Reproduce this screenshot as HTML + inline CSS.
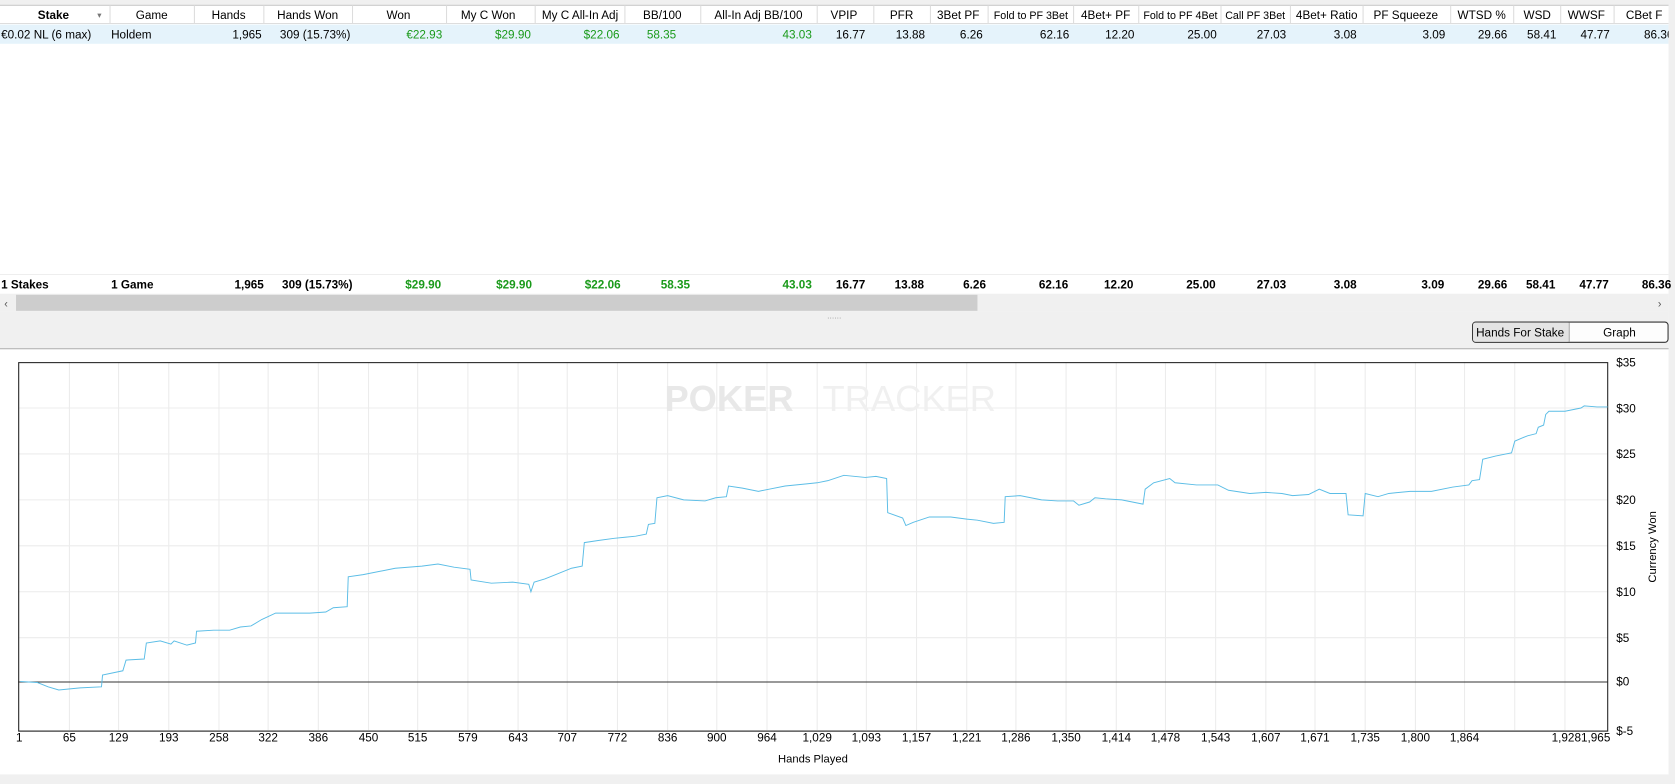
<!DOCTYPE html>
<html><head><meta charset="utf-8"><style>
html,body{margin:0;padding:0;background:#fff;overflow:hidden}
svg{display:block}
text{font-family:"Liberation Sans",sans-serif;font-size:11px;fill:#000}
.h{text-anchor:middle}
.r{text-anchor:end}
.g{fill:#1a9a1a}
.b{font-weight:bold}
.ax{font-size:10.5px}
</style></head><body>
<svg width="1675" height="784" viewBox="0 0 1568 734" preserveAspectRatio="none">
<rect x="0" y="0" width="1568" height="734" fill="#fff"/>
<rect x="0" y="0" width="1568" height="5" fill="#f0f0f0"/>
<line x1="0" y1="5" x2="1562" y2="5" stroke="#ccc"/>
<line x1="0" y1="22" x2="1562" y2="22" stroke="#ddd"/>
<rect x="0" y="23" width="1562" height="18" fill="#e5f3fb"/>
<g stroke="#ddd">
<line x1="103" y1="5" x2="103" y2="22"/><line x1="182" y1="5" x2="182" y2="22"/><line x1="247" y1="5" x2="247" y2="22"/><line x1="330" y1="5" x2="330" y2="22"/><line x1="418" y1="5" x2="418" y2="22"/><line x1="501" y1="5" x2="501" y2="22"/><line x1="585" y1="5" x2="585" y2="22"/><line x1="656" y1="5" x2="656" y2="22"/><line x1="765" y1="5" x2="765" y2="22"/><line x1="818" y1="5" x2="818" y2="22"/><line x1="871" y1="5" x2="871" y2="22"/><line x1="925" y1="5" x2="925" y2="22"/><line x1="1005" y1="5" x2="1005" y2="22"/><line x1="1066" y1="5" x2="1066" y2="22"/><line x1="1143" y1="5" x2="1143" y2="22"/><line x1="1208" y1="5" x2="1208" y2="22"/><line x1="1276" y1="5" x2="1276" y2="22"/><line x1="1358" y1="5" x2="1358" y2="22"/><line x1="1417" y1="5" x2="1417" y2="22"/><line x1="1461" y1="5" x2="1461" y2="22"/><line x1="1511" y1="5" x2="1511" y2="22"/>
</g>
<g style="font-size:10.5px">
<text x="50" y="18" class="h b">Stake</text><text x="91" y="17" style="font-size:8px;fill:#777">▾</text>
<text x="142" y="18" class="h">Game</text><text x="214" y="18" class="h">Hands</text><text x="288" y="18" class="h">Hands Won</text><text x="373" y="18" class="h">Won</text><text x="457" y="18" class="h">My C Won</text><text x="543" y="18" class="h">My C All-In Adj</text><text x="620" y="18" class="h">BB/100</text><text x="710" y="18" class="h">All-In Adj BB/100</text><text x="790" y="18" class="h">VPIP</text><text x="844" y="18" class="h">PFR</text><text x="897" y="18" class="h">3Bet PF</text><text x="965" y="18" class="h" style="font-size:10px">Fold to PF 3Bet</text><text x="1035" y="18" class="h">4Bet+ PF</text><text x="1105" y="18" class="h" style="font-size:10px">Fold to PF 4Bet</text><text x="1175" y="18" class="h" style="font-size:10px">Call PF 3Bet</text><text x="1242" y="18" class="h">4Bet+ Ratio</text><text x="1316" y="18" class="h">PF Squeeze</text><text x="1387" y="18" class="h">WTSD %</text><text x="1439" y="18" class="h">WSD</text><text x="1485" y="18" class="h">WWSF</text><text x="1522" y="18">CBet F</text>
</g>
<g style="font-size:10.5px">
<text x="1" y="36">€0.02 NL (6 max)</text><text x="104" y="36">Holdem</text><text x="245" y="36" class="r">1,965</text><text x="328" y="36" class="r">309 (15.73%)</text>
<text x="414" y="36" class="r g">€22.93</text><text x="497" y="36" class="r g">$29.90</text><text x="580" y="36" class="r g">$22.06</text><text x="633" y="36" class="r g">58.35</text><text x="760" y="36" class="r g">43.03</text>
<text x="810" y="36" class="r">16.77</text><text x="866" y="36" class="r">13.88</text><text x="920" y="36" class="r">6.26</text><text x="1001" y="36" class="r">62.16</text><text x="1062" y="36" class="r">12.20</text><text x="1139" y="36" class="r">25.00</text><text x="1204" y="36" class="r">27.03</text><text x="1270" y="36" class="r">3.08</text><text x="1353" y="36" class="r">3.09</text><text x="1411" y="36" class="r">29.66</text><text x="1457" y="36" class="r">58.41</text><text x="1507" y="36" class="r">47.77</text><text x="1539" y="36">86.36</text>
</g>
<rect x="1562" y="0" width="6" height="734" fill="#f0f0f0"/>
<line x1="0" y1="257" x2="1562" y2="257" stroke="#eee"/>
<g style="font-size:10.5px">
<text x="1" y="270" class="b">1 Stakes</text><text x="104" y="270" class="b">1 Game</text><text x="247" y="270" class="r b">1,965</text><text x="330" y="270" class="r b">309 (15.73%)</text>
<text x="413" y="270" class="r b g">$29.90</text><text x="498" y="270" class="r b g">$29.90</text><text x="581" y="270" class="r b g">$22.06</text><text x="646" y="270" class="r b g">58.35</text><text x="760" y="270" class="r b g">43.03</text>
<text x="810" y="270" class="r b">16.77</text><text x="865" y="270" class="r b">13.88</text><text x="923" y="270" class="r b">6.26</text><text x="1000" y="270" class="r b">62.16</text><text x="1061" y="270" class="r b">12.20</text><text x="1138" y="270" class="r b">25.00</text><text x="1204" y="270" class="r b">27.03</text><text x="1270" y="270" class="r b">3.08</text><text x="1352" y="270" class="r b">3.09</text><text x="1411" y="270" class="r b">29.66</text><text x="1456" y="270" class="r b">58.41</text><text x="1506" y="270" class="r b">47.77</text><text x="1537" y="270" class="b">86.36</text>
</g>
<rect x="0" y="275" width="1562" height="17" fill="#f0f0f0"/>
<rect x="15" y="276" width="900" height="15" fill="#cdcdcd"/>
<text x="4" y="288" style="font-size:10px;fill:#555">‹</text><text x="1552" y="288" style="font-size:10px;fill:#555">›</text>
<rect x="0" y="292" width="1562" height="34" fill="#f0f0f0"/>
<text x="781" y="298" class="h" style="font-size:8px;fill:#999">......</text>
<rect x="1378.5" y="301.5" width="183" height="19" rx="3" fill="#fdfdfd" stroke="#333"/>
<rect x="1379" y="302" width="90" height="18" rx="2" fill="#e4e4e4"/>
<line x1="1469" y1="302" x2="1469" y2="320" stroke="#aaa"/>
<text x="1423" y="315" class="h">Hands For Stake</text><text x="1516" y="315" class="h">Graph</text>
<line x1="0" y1="326.5" x2="1562" y2="326.5" stroke="#aaa"/>
<g stroke="#ececec">
<line x1="17" y1="382" x2="1505" y2="382"/><line x1="17" y1="425" x2="1505" y2="425"/><line x1="17" y1="468" x2="1505" y2="468"/><line x1="17" y1="511" x2="1505" y2="511"/><line x1="17" y1="554" x2="1505" y2="554"/><line x1="17" y1="597" x2="1505" y2="597"/><line x1="17" y1="684" x2="1505" y2="684"/>
<path d="M65 339V684M111 339V684M158 339V684M205 339V684M251 339V684M298 339V684M345 339V684M391 339V684M438 339V684M485 339V684M531 339V684M578 339V684M625 339V684M671 339V684M718 339V684M765 339V684M811 339V684M858 339V684M905 339V684M951 339V684M998 339V684M1045 339V684M1091 339V684M1138 339V684M1185 339V684M1231 339V684M1278 339V684M1325 339V684M1371 339V684M1418 339V684M1465 339V684"/>
</g>
<text x="622" y="385" style="font-size:34px;font-weight:bold;fill:#e8e8e8">POKER</text>
<text x="770" y="385" style="font-size:34px;fill:#f0f0f0">TRACKER</text>
<line x1="17" y1="638.5" x2="1505" y2="638.5" stroke="#333"/>
<rect x="17.5" y="339.5" width="1487.5" height="345" fill="none" stroke="#222"/>
<polyline fill="none" stroke="#5bbde6" stroke-width="0.9" points="19,638 35,639 45,643 55,646 75,644 95,643 96,632 115,628 118,618 135,617 137,602 150,600 160,603 163,600 175,604 183,602 184,591 200,590 215,590 225,587 235,586 245,580 258,574 290,574 305,573 312,569 325,568 326,540 340,538 370,532 395,530 410,528 425,531 440,533 441,543 460,546 480,545 495,547 497,554 500,545 510,542 520,538 535,532 545,530 547,508 560,506 575,504 585,503 595,502 605,500 607,491 613,490 615,466 625,464 640,468 660,469 670,466 680,465 682,455 695,457 710,460 720,458 735,455 755,453 765,452 775,450 790,445 810,447 820,446 830,448 831,480 845,485 848,492 855,489 870,484 890,484 905,486 915,487 930,490 940,489 941,465 955,464 975,468 990,469 1005,469 1010,473 1020,470 1025,466 1035,467 1050,468 1070,472 1072,458 1080,452 1095,448 1100,452 1120,454 1140,454 1150,459 1170,462 1185,461 1200,462 1210,464 1225,463 1235,458 1245,462 1260,462 1262,482 1276,483 1278,462 1290,465 1300,462 1320,460 1340,460 1360,456 1375,454 1378,450 1385,449 1388,430 1400,427 1415,424 1418,413 1425,410 1430,408 1438,406 1440,400 1445,398 1447,388 1450,385 1465,385 1480,382 1483,380 1495,381 1505,381"/>
<g class="ax">
<text x="1513" y="343">$35</text><text x="1513" y="386">$30</text><text x="1513" y="429">$25</text><text x="1513" y="472">$20</text><text x="1513" y="515">$15</text><text x="1513" y="558">$10</text><text x="1513" y="601">$5</text><text x="1513" y="642">$0</text><text x="1513" y="688">$-5</text>
</g>
<text x="1550" y="512" class="h" transform="rotate(-90 1550 512)" style="font-size:10.5px">Currency Won</text>
<g class="ax h">
<text x="18" y="694">1</text><text x="65" y="694">65</text><text x="111" y="694">129</text><text x="158" y="694">193</text><text x="205" y="694">258</text><text x="251" y="694">322</text><text x="298" y="694">386</text><text x="345" y="694">450</text><text x="391" y="694">515</text><text x="438" y="694">579</text><text x="485" y="694">643</text><text x="531" y="694">707</text><text x="578" y="694">772</text><text x="625" y="694">836</text><text x="671" y="694">900</text><text x="718" y="694">964</text><text x="765" y="694">1,029</text><text x="811" y="694">1,093</text><text x="858" y="694">1,157</text><text x="905" y="694">1,221</text><text x="951" y="694">1,286</text><text x="998" y="694">1,350</text><text x="1045" y="694">1,414</text><text x="1091" y="694">1,478</text><text x="1138" y="694">1,543</text><text x="1185" y="694">1,607</text><text x="1231" y="694">1,671</text><text x="1278" y="694">1,735</text><text x="1325" y="694">1,800</text><text x="1371" y="694">1,864</text><text x="1480" y="694">1,9281,965</text>
</g>
<text x="761" y="714" class="h ax">Hands Played</text>
<rect x="0" y="725" width="1568" height="9" fill="#f0f0f0"/>
</svg>
</body></html>
